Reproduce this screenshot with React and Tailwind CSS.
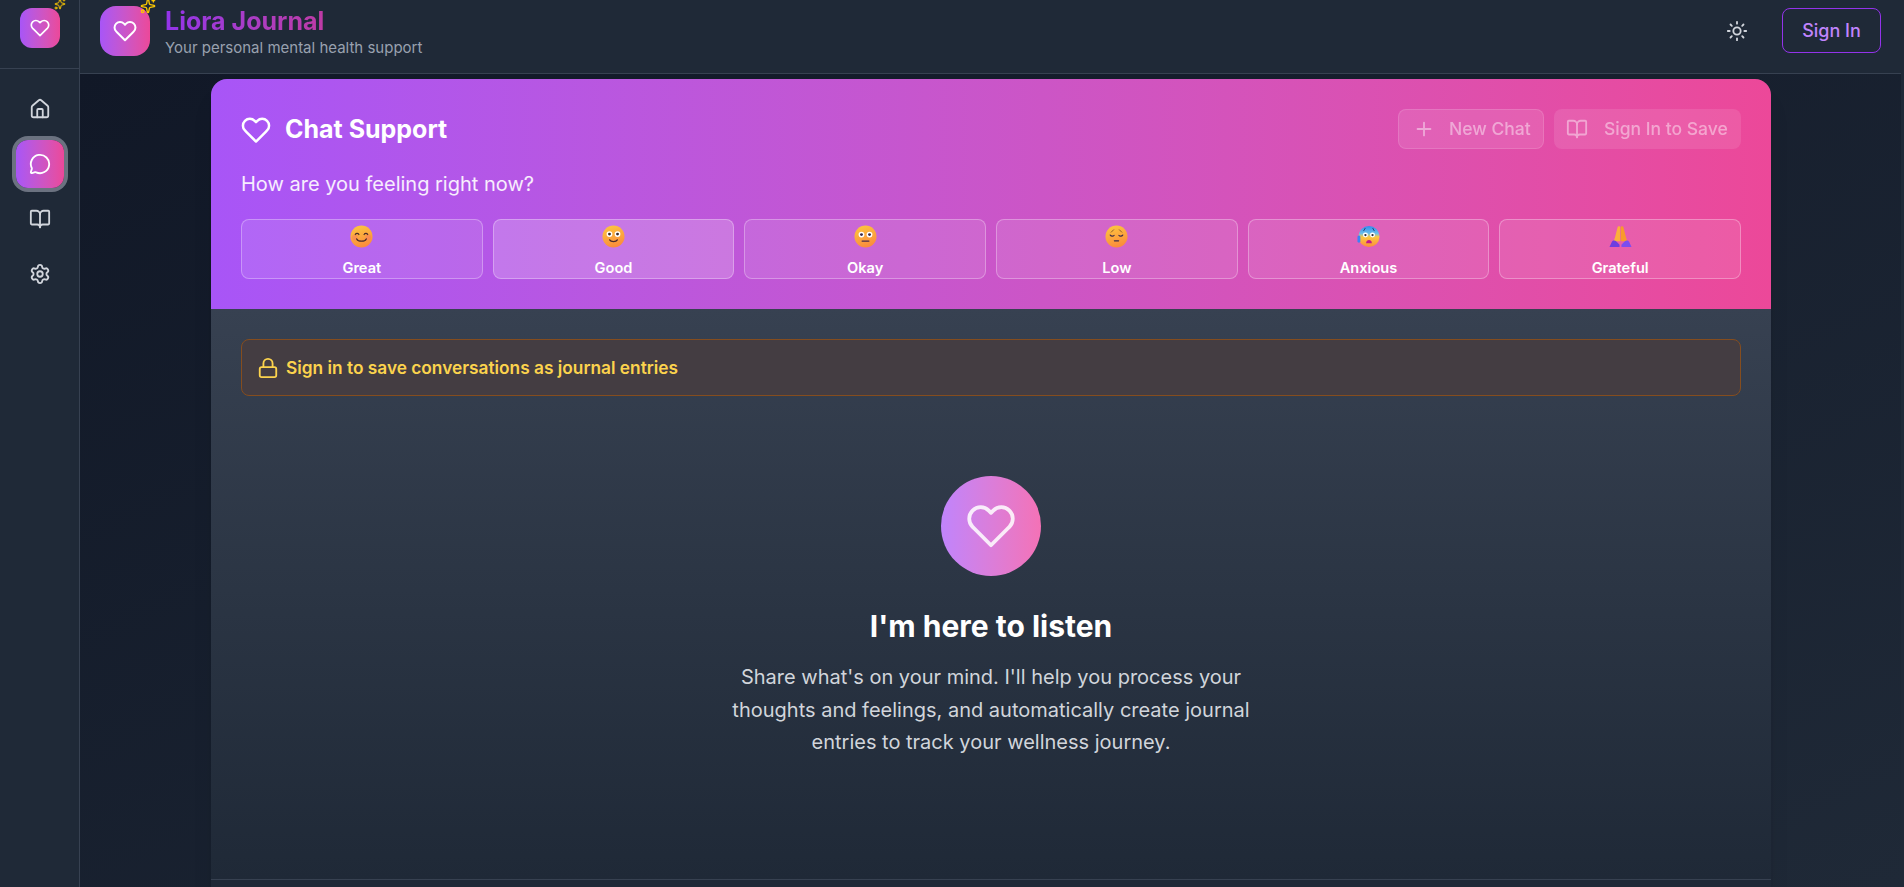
import { House, MessageCircle, BookOpen, Settings, Sun, Plus, Lock, Sparkles } from 'lucide-react'

function Heart({ size = 24, className = '', strokeWidth = 2 }) {
  return (
    <svg width={size} height={size} viewBox="0 0 24 24" fill="none" stroke="currentColor" strokeWidth={strokeWidth} strokeLinecap="round" strokeLinejoin="round" className={className}>
      <path d="M20.84 4.61a5.5 5.5 0 0 0-7.78 0L12 5.67l-1.06-1.06a5.5 5.5 0 0 0-7.78 7.78l1.06 1.06L12 21.23l7.78-7.78 1.06-1.06a5.5 5.5 0 0 0 0-7.78z" />
    </svg>
  )
}

const faceGrad = (id) => (
  <defs>
    <linearGradient id={id} x1="0.1" y1="0" x2="0.4" y2="1">
      <stop offset="0" stopColor="#fdc83f" />
      <stop offset="1" stopColor="#fb8d3c" />
    </linearGradient>
  </defs>
)

function EmojiGreat() {
  return (
    <svg width="27" height="27" viewBox="0 0 24 24" fill="none">
      {faceGrad('fg1')}
      <circle cx="12" cy="12" r="11.5" fill="url(#fg1)" />
      <circle cx="5" cy="13" r="3" fill="#f8706a" opacity="0.4" />
      <circle cx="19" cy="13" r="3" fill="#f8706a" opacity="0.4" />
      <path d="M5.5 10c.8-1.6 3-1.6 3.800 0M14.700 10c.8-1.600 3-1.600 3.800 0" stroke="#4a2a2a" strokeWidth="1.200" strokeLinecap="round" />
      <path d="M7 14.500c1.500 3.200 8.500 3.200 10 0" stroke="#4a2a2a" strokeWidth="1.300" strokeLinecap="round" />
    </svg>
  )
}

function EmojiGood() {
  return (
    <svg width="27" height="27" viewBox="0 0 24 24" fill="none">
      {faceGrad('fg2')}
      <circle cx="12" cy="12" r="11.500" fill="url(#fg2)" />
      <circle cx="7.800" cy="9.500" r="3" fill="#fff" />
      <circle cx="16.200" cy="9.500" r="3" fill="#fff" />
      <circle cx="7.800" cy="9.500" r="1.500" fill="#3a2a2a" />
      <circle cx="16.200" cy="9.500" r="1.500" fill="#3a2a2a" />
      <path d="M8 15.500c1.300 2.400 6.700 2.400 8 0" stroke="#4a2a2a" strokeWidth="1.300" strokeLinecap="round" />
    </svg>
  )
}

function EmojiOkay() {
  return (
    <svg width="27" height="27" viewBox="0 0 24 24" fill="none">
      {faceGrad('fg3')}
      <circle cx="12" cy="12" r="11.500" fill="url(#fg3)" />
      <circle cx="7.800" cy="10" r="3" fill="#fff" />
      <circle cx="16.200" cy="10" r="3" fill="#fff" />
      <circle cx="7.800" cy="10" r="1.500" fill="#3a2a4a" />
      <circle cx="16.200" cy="10" r="1.500" fill="#3a2a4a" />
      <path d="M8.500 16.800h7" stroke="#4a2a4a" strokeWidth="1.400" strokeLinecap="round" />
    </svg>
  )
}

function EmojiLow() {
  return (
    <svg width="27" height="27" viewBox="0 0 24 24" fill="none">
      {faceGrad('fg4')}
      <circle cx="12" cy="12" r="11.500" fill="url(#fg4)" />
      <path d="M9 5 6.500 7.500M15 5l2.500 2.500" stroke="#8a5a2a" strokeWidth="1" strokeLinecap="round" />
      <path d="M5.500 10.500c1 1.400 3 1.400 4 .3M14.500 10.800c1 1.100 3 1.100 4-.3" stroke="#3a2a4a" strokeWidth="1.200" strokeLinecap="round" />
      <path d="M9.800 16.500h4.400" stroke="#3a2a4a" strokeWidth="1.300" strokeLinecap="round" />
    </svg>
  )
}

function EmojiAnxious() {
  return (
    <svg width="27" height="27" viewBox="0 0 24 24" fill="none">
      <defs>
        <linearGradient id="fg5" x1="0" y1="0" x2="0" y2="1">
          <stop offset="0" stopColor="#2f8cf0" />
          <stop offset="0.36" stopColor="#6cc0e8" />
          <stop offset="0.52" stopColor="#fdc83f" />
          <stop offset="1" stopColor="#fb8d3c" />
        </linearGradient>
      </defs>
      <circle cx="12.500" cy="12" r="11" fill="url(#fg5)" />
      <rect x="0.500" y="11" width="3" height="7.500" rx="1.500" fill="#3b82f6" />
      <path d="M8.500 3.500 7 6M16.500 3.500 18 6" stroke="#27407a" strokeWidth="1" strokeLinecap="round" />
      <circle cx="8.800" cy="10.500" r="2.600" fill="#fff" />
      <circle cx="16.200" cy="10.500" r="2.600" fill="#fff" />
      <circle cx="8.800" cy="10.500" r="1.200" fill="#2a2a3a" />
      <circle cx="16.200" cy="10.500" r="1.200" fill="#2a2a3a" />
      <path d="M9.500 19c0-4.500 6-4.500 6 0z" fill="#c2188c" />
    </svg>
  )
}

function EmojiGrateful() {
  return (
    <svg width="27" height="27" viewBox="0 0 24 24" fill="none">
      <path d="M11.700 17V2.500c0-1.500-2.400-1.500-2.800 0L6.500 12l-1.500 5z" fill="#fbb03b" />
      <path d="M12.300 17V2.500c0-1.500 2.400-1.500 2.800 0L17.500 12l1.500 5z" fill="#f99a2c" />
      <path d="M0.500 23l2.500-5.500c1-1.800 3.500-1.800 5 0l3 3V23z" fill="#6d3ee0" />
      <path d="M23.500 23l-2.500-5.500c-1-1.800-3.500-1.800-5 0l-3 3V23z" fill="#7c4df0" />
    </svg>
  )
}

const moods = [
  { label: 'Great', Emoji: EmojiGreat },
  { label: 'Good', Emoji: EmojiGood, active: true },
  { label: 'Okay', Emoji: EmojiOkay },
  { label: 'Low', Emoji: EmojiLow },
  { label: 'Anxious', Emoji: EmojiAnxious },
  { label: 'Grateful', Emoji: EmojiGrateful },
]

function Logo({ small }) {
  return (
    <div className={`relative shrink-0 flex items-center justify-center bg-gradient-to-r from-[#a855f7] to-[#ec4899] ${small ? 'w-10 h-10 rounded-xl' : 'w-[50px] h-[50px] rounded-2xl'}`}>
      <Heart className="text-white" size={small ? 20 : 24} />
      <Sparkles
        className={`absolute text-yellow-400 ${small ? '-top-2.5 -right-1.5' : '-top-2 -right-1.5'}`}
        size={small ? 12 : 16}
        strokeWidth={2}
      />
    </div>
  )
}

export default function App() {
  return (
    <div className="flex h-screen overflow-hidden bg-[#111827] text-white font-['Inter',sans-serif]">
      {/* Sidebar */}
      <aside className="w-20 shrink-0 bg-[#1f2937] border-r border-[#374151] flex flex-col">
        <div className="h-[69px] pt-2 flex justify-center border-b border-[#374151]">
          <Logo small />
        </div>
        <nav className="flex flex-col items-center pt-4 gap-[7px]">
          <button className="w-12 h-12 flex items-center justify-center text-gray-300">
            <House size={22} />
          </button>
          <button className="w-12 h-12 flex items-center justify-center rounded-xl text-white bg-gradient-to-r from-[#a855f7] to-[#ec4899] ring-4 ring-[#6b7280]">
            <MessageCircle size={22} />
          </button>
          <button className="w-12 h-12 flex items-center justify-center text-gray-300">
            <BookOpen size={22} />
          </button>
          <button className="w-12 h-12 flex items-center justify-center text-gray-300">
            <Settings size={22} />
          </button>
        </nav>
      </aside>

      <div className="flex-1 min-w-0 flex flex-col pr-[3px] bg-[#1f2937]">
        {/* Top bar */}
        <header className="h-[74px] shrink-0 bg-[#1f2937] border-b border-[#374151] flex items-start pl-5 pr-5 pt-1.5">
          <Logo />
          <div className="ml-[15px] -mt-[1px]">
            <h1 className="text-[25px] font-bold bg-gradient-to-r from-[#9333ea] to-[#db2777] bg-clip-text text-transparent leading-8">Liora Journal</h1>
            <p className="text-[15px] text-gray-400">Your personal mental health support</p>
          </div>
          <div className="ml-auto flex items-center gap-[34px] pt-0.5">
            <Sun size={22} className="text-gray-300" />
            <button className="w-[99px] h-[45px] rounded-lg border border-[#9333ea] text-[#c084fc] font-medium text-lg">Sign In</button>
          </div>
        </header>

        {/* Main */}
        <main className="flex-1 min-h-0 bg-gradient-to-br from-[#111827] to-[#1f2937] pl-[131px] pr-[130px] pt-[5px] overflow-hidden">
          <div className="h-full rounded-t-2xl overflow-hidden flex flex-col bg-[#1f2937] shadow-xl">
            <section className="h-[230px] shrink-0 bg-gradient-to-r from-[#a855f7] to-[#ec4899] px-[30px] pt-[30px]">
              <div className="flex items-center justify-between h-10">
                <div className="flex items-center gap-3.5 pt-[2px]">
                  <Heart size={30} />
                  <h2 className="text-[25px] font-bold">Chat Support</h2>
                </div>
                <div className="flex items-center gap-2.5 opacity-50 text-[17.5px] font-medium leading-none">
                  <button className="h-10 w-[146px] rounded-lg bg-white/20 border border-white/30 flex items-center pl-[14px] gap-3.5 whitespace-nowrap">
                    <Plus size={22} />
                    New Chat
                  </button>
                  <button className="h-10 w-[187px] rounded-lg bg-white/20 flex items-center px-3 gap-4 whitespace-nowrap">
                    <BookOpen size={22} />
                    Sign In to Save
                  </button>
                </div>
              </div>
              <p className="mt-[21px] text-xl text-white/90 leading-7">How are you feeling right now?</p>
              <div className="mt-[21px] grid grid-cols-6 gap-2.5">
                {moods.map(({ label, Emoji, active }) => (
                  <button
                    key={label}
                    className={`h-[60px] rounded-lg border border-white/30 flex flex-col items-center pt-[5px] text-[14.6px] font-semibold ${active ? 'bg-white/20' : 'bg-white/10'}`}
                  >
                    <Emoji />
                    <span className="mt-[10px] leading-5">{label}</span>
                  </button>
                ))}
              </div>
            </section>

            <section className="flex-1 min-h-0 flex flex-col px-[30px] pt-[30px] bg-gradient-to-b from-[#374151] to-[#1f2937]">
              <div className="h-[57px] shrink-0 rounded-lg border border-[#854d1e] bg-[#443d42] flex items-center px-[15px] gap-[7px] text-[#fcd34d] text-[17.3px] font-semibold">
                <Lock size={22} />
                Sign in to save conversations as journal entries
              </div>
              <div className="flex-1 flex flex-col items-center pt-20 text-center">
                <div className="w-[100px] h-[100px] rounded-full bg-gradient-to-r from-[#c084fc] to-[#f472b6] flex items-center justify-center">
                  <Heart size={50} strokeWidth={1.8} className="text-white/85" />
                </div>
                <h3 className="mt-[30px] text-3xl font-bold leading-10">I'm here to listen</h3>
                <p className="mt-[15px] max-w-[540px] text-xl leading-relaxed text-[#d1d5db]">
                  Share what's on your mind. I'll help you process your thoughts and feelings, and automatically create journal entries to track your wellness journey.
                </p>
              </div>
            </section>
            <div className="h-2 shrink-0 border-t border-[#374151]" />
          </div>
        </main>
      </div>
    </div>
  )
}
